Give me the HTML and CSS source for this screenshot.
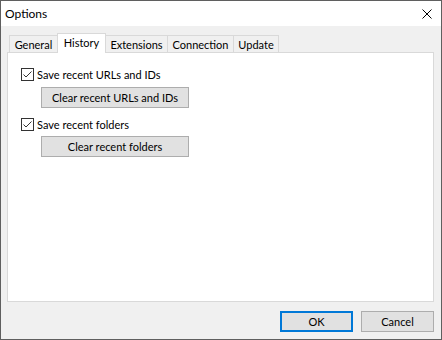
FILE: index.html
```html
<!DOCTYPE html>
<html>
<head>
<meta charset="utf-8">
<link rel="stylesheet" href="styles.css">
</head>
<body>
<div class="window">
  <div class="titlebar">
    <span class="title">Options</span>
    <svg class="close" width="10" height="10" viewBox="0 0 10 10"><path d="M0.5 0.5L9.5 9.5M9.5 0.5L0.5 9.5" stroke="#000" stroke-width="1" fill="none"/></svg>
  </div>
  <div class="body">
    <div class="tabs">
      <div class="tab w-general">General</div>
      <div class="tab active w-history">History</div>
      <div class="tab w-ext">Extensions</div>
      <div class="tab w-conn">Connection</div>
      <div class="tab w-update">Update</div>
    </div>
    <div class="panel">
      <label class="check">
        <svg class="box" width="13" height="13" viewBox="0 0 13 13"><rect x="0.5" y="0.5" width="12" height="12" fill="#fff" stroke="#333"/><path d="M2.5 6.5L5 9L10.5 3.5" stroke="#333" stroke-width="1" fill="none"/></svg>
        <span>Save recent URLs and IDs</span>
      </label>
      <button class="btn clear first">Clear recent URLs and IDs</button>
      <label class="check second">
        <svg class="box" width="13" height="13" viewBox="0 0 13 13"><rect x="0.5" y="0.5" width="12" height="12" fill="#fff" stroke="#333"/><path d="M2.5 6.5L5 9L10.5 3.5" stroke="#333" stroke-width="1" fill="none"/></svg>
        <span>Save recent folders</span>
      </label>
      <button class="btn clear last">Clear recent folders</button>
    </div>
    <div class="footer">
      <button class="btn dlg ok">OK</button>
      <button class="btn dlg">Cancel</button>
    </div>
  </div>
</div>
</body>
</html>
```
FILE: styles.css
```css
* { box-sizing: border-box; }
html, body { margin: 0; padding: 0; background: #fff; }
body {
  font-family: Lato, "Liberation Sans", sans-serif;
  font-size: 11px;
  color: #000;
}
.window {
  width: 442px;
  height: 340px;
  border: 1px solid #5f5f5f;
  display: flex;
  flex-direction: column;
  background: #f0f0f0;
}
.titlebar {
  height: 25px;
  background: #fff;
  display: flex;
  align-items: center;
  justify-content: space-between;
  padding: 0 9px 1px 4px;
}
.title { font-size: 12px; }
.close { display: block; margin-top: 2px; }
.body {
  flex: 1;
  display: flex;
  flex-direction: column;
  padding: 7px 7px 0 6px;
}
.tabs {
  display: flex;
  align-items: flex-end;
  height: 19px;
  padding-left: 2px;
}
.tab {
  height: 17px;
  border: 1px solid #d9d9d9;
  border-bottom: none;
  background: #f0f0f0;
  display: flex;
  align-items: center;
  justify-content: center;
  padding-top: 1px;
  margin-left: -1px;
}
.tab:first-child { margin-left: 0; }
.tab.active {
  height: 20px;
  margin-bottom: -1px;
  background: #fff;
  position: relative;
  z-index: 1;
  padding-top: 0;
  padding-bottom: 2px;
}
.w-general { width: 49px; }
.w-history { width: 49px; }
.w-ext { width: 63px; }
.w-conn { width: 67px; }
.w-update { width: 46px; }
.panel {
  height: 250px;
  background: #fff;
  border: 1px solid #d9d9d9;
  padding: 15px 0 0 13px;
  display: flex;
  flex-direction: column;
  align-items: flex-start;
}
.check {
  display: flex;
  align-items: center;
  height: 13px;
  gap: 3px;
  white-space: nowrap;
}
.check .box { display: block; flex: none; }
.check.second { margin-top: 10px; }
.btn {
  font-family: inherit;
  font-size: 11px;
  color: #000;
  background: #e1e1e1;
  border: 1px solid #adadad;
  padding: 0;
  margin: 0;
  height: 21px;
  display: flex;
  align-items: center;
  justify-content: center;
}
.clear { width: 148px; margin-left: 20px; }
.clear.first { margin-top: 6px; }
.clear.last { margin-top: 5px; }
.footer {
  display: flex;
  justify-content: flex-end;
  gap: 8px;
  margin-top: 9px;
}
.dlg { width: 73px; }
.ok { border: 2px solid #0078d7; }
```
